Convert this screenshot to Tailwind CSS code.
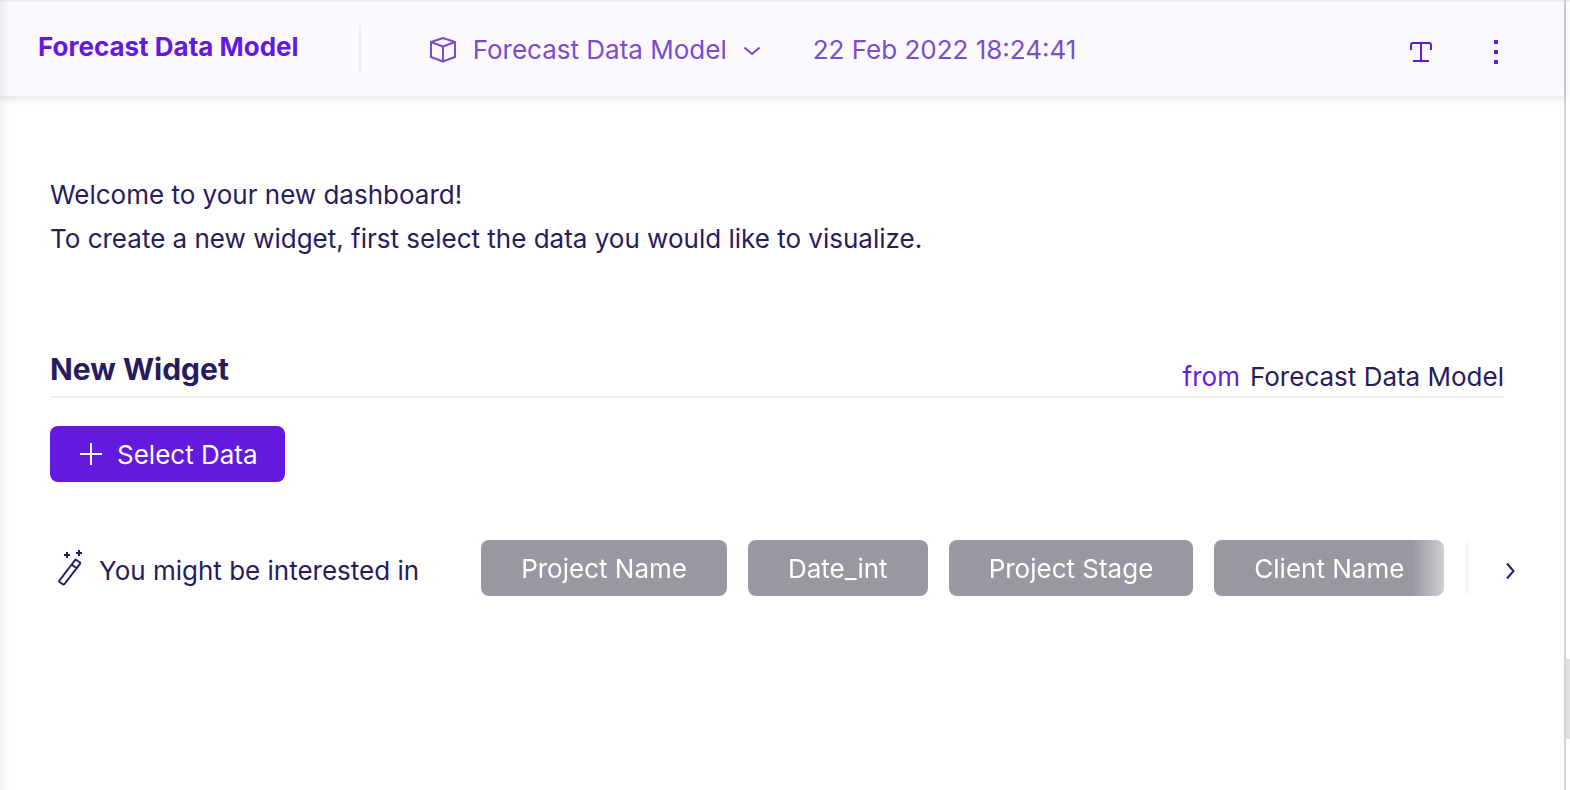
<!DOCTYPE html>
<html lang="en">
  <head>
    <meta charset="UTF-8" />
    <meta name="viewport" content="width=device-width, initial-scale=1.0" />
    <title>Forecast Data Model</title>
    <script src="https://cdn.jsdelivr.net/npm/@tailwindcss/browser@4"></script>
  </head>

  <body class="flex min-h-screen bg-white font-['Inter',sans-serif] text-[26px] text-[#281b5e]">
    <div class="relative flex min-w-0 flex-1 flex-col border-r-2 border-[#d3d3d3]">
      <header
        class="flex h-24 items-center border-t-2 border-t-[#ebeef1] bg-[#fbf9fe] pr-14 pl-[38px] shadow-[0_2px_8px_rgba(40,50,60,0.16)]"
      >
        <h1 class="pb-1.5 text-[26px] font-bold whitespace-nowrap text-[#6419df]">Forecast Data Model</h1>
        <div class="ml-[60px] h-12 w-0.5 shrink-0 bg-[#ebedf1]"></div>
        <label for="model" class="relative ml-[68px] flex items-center text-[#7a4dcb]">
          <svg class="h-7 w-7 shrink-0" viewBox="0 0 28 28" fill="none" stroke="currentColor" stroke-width="2" stroke-linejoin="round">
            <path d="M14 3 26 7V22L14 26.500 2 22V7ZM2 7 14 11.500 26 7M14 11.500V26.500" />
          </svg>
          <select id="model" aria-label="Data model" class="ml-4 appearance-none pr-8">
            <option>Forecast Data Model</option>
          </select>
          <svg class="pointer-events-none absolute right-0 h-4 w-4" viewBox="0 0 16 16" fill="none" stroke="currentColor" stroke-width="2">
            <path d="M0.500 6.500 8 13 15.500 6.500" />
          </svg>
        </label>
        <time class="ml-[53px] whitespace-nowrap text-[#7a4dcb]" datetime="2022-02-22T18:24:41">22 Feb 2022 18:24:41</time>
        <div class="ml-auto flex items-center gap-[51px] pt-1.5 text-[#6419df]">
          <button aria-label="Add text">
            <svg class="h-6 w-6" viewBox="0 0 24 24" fill="none" stroke="currentColor" stroke-width="2">
              <path d="M2 10V5Q2 3 4 3H20Q22 3 22 5V10M12 3V21M4 21H20" />
            </svg>
          </button>
          <button aria-label="More options">
            <svg class="h-6 w-6" viewBox="0 0 24 24" fill="currentColor">
              <path d="M10 0h4v4h-4zM10 10h4v4h-4zM10 20h4v4h-4z" />
            </svg>
          </button>
        </div>
      </header>

      <main class="flex-1 px-[50px] pt-[77px]">
        <p class="leading-11">
          Welcome to your new dashboard!<br />
          To create a new widget, first select the data you would like to visualize.
        </p>

        <section class="mt-[90px]">
          <div class="mr-[10px] flex items-start justify-between border-b-2 border-[#f1f1f3] pb-px">
            <h2 class="text-[30px] leading-9 font-bold">New Widget</h2>
            <p class="pt-2 leading-9"><span class="mr-[10px] text-[#6419df]">from</span>Forecast Data Model</p>
          </div>
          <button class="mt-7 flex h-14 items-center rounded-lg bg-[#6419df] pr-[27px] pl-[30px] text-white">
            <svg class="mr-[15px] h-[22px] w-[22px]" viewBox="0 0 22 22" stroke="currentColor" stroke-width="2">
              <path d="M11 0V22M0 11H22" />
            </svg>
            Select Data
          </button>
        </section>

        <section class="mt-[58px] flex items-center">
          <svg class="ml-2 h-9 w-6 shrink-0" viewBox="0 0 24 36" fill="none" stroke="currentColor" stroke-width="2" stroke-linejoin="round">
            <path d="M17.500 9.500 22 12.500Q22.500 13 22 13.800L6.500 34Q5.500 35 4.500 34L1.500 32Q.800 31.500 1.500 30.500ZM13.500 14.500 18.500 18" />
            <path d="M6 5H12M9 2V8M18 3H24M21 0V6" />
          </svg>
          <h3 class="ml-[17px] pt-1 whitespace-nowrap">You might be interested in</h3>
          <!-- suggestions fade out towards the scroll arrow -->
          <div
            class="ml-[62px] flex min-w-0 flex-1 gap-[21px] overflow-hidden whitespace-nowrap text-white [mask-image:linear-gradient(to_left,transparent,black_60px)]"
          >
            <button class="h-14 shrink-0 rounded-lg bg-[#9997a1] px-10">Project Name</button>
            <button class="h-14 shrink-0 rounded-lg bg-[#9997a1] px-10">Date_int</button>
            <button class="h-14 shrink-0 rounded-lg bg-[#9997a1] px-10">Project Stage</button>
            <button class="h-14 shrink-0 rounded-lg bg-[#9997a1] px-10">Client Name</button>
            <button class="h-14 shrink-0 rounded-lg bg-[#9997a1] px-10" aria-label="Next suggestion"></button>
          </div>
          <button class="-mr-0.5 ml-8 shrink-0 pt-1.5" aria-label="Scroll suggestions">
            <svg class="h-5 w-3" viewBox="0 0 12 20" fill="none" stroke="currentColor" stroke-width="2">
              <path d="M3 2.500 9.500 10 3 17.500" />
            </svg>
          </button>
        </section>
      </main>

      <div class="pointer-events-none absolute inset-y-0 left-0 w-2.5 bg-linear-to-r from-black/5 to-transparent"></div>
    </div>

    <!-- page scroll thumb -->
    <div class="flex w-1 flex-col border-t-2 border-[#ebeef1]">
      <div class="flex-[657]"></div>
      <div class="h-20 bg-[#e0e0e0]"></div>
      <div class="flex-[51]"></div>
    </div>
  </body>
</html>
